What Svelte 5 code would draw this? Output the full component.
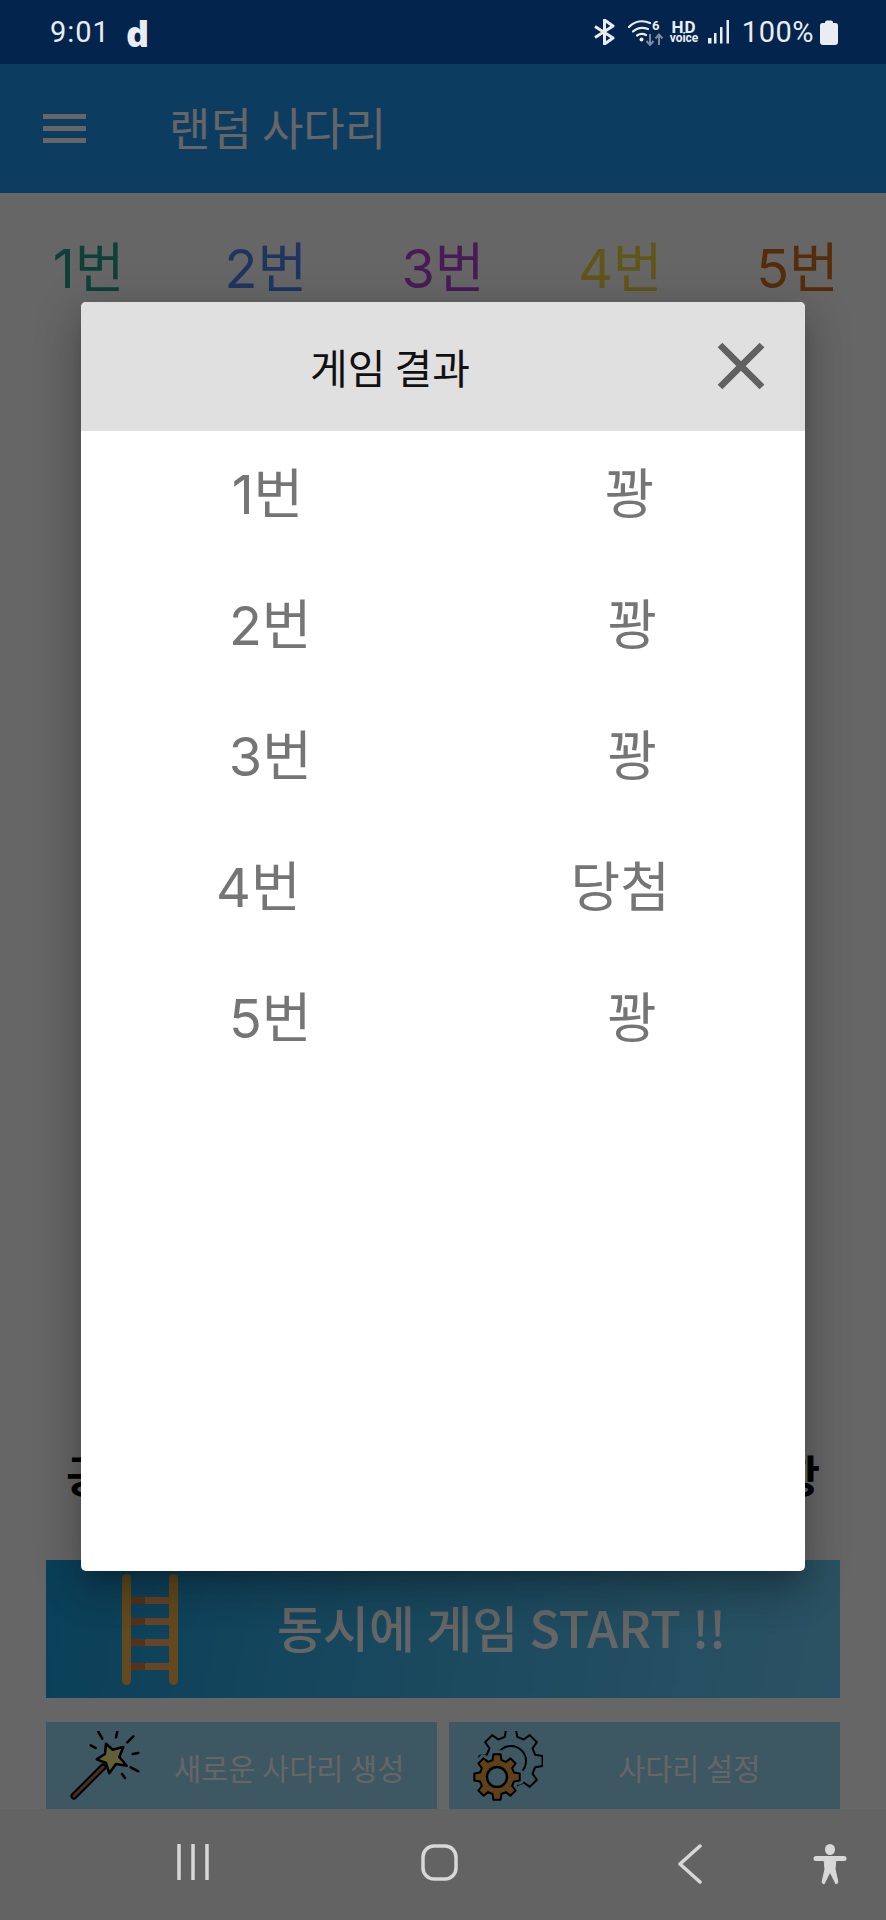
<script>
  const players = [
    { label: '1번', color: '#26a08c' },
    { label: '2번', color: '#4f86f0' },
    { label: '3번', color: '#b445d8' },
    { label: '4번', color: '#f0d840' },
    { label: '5번', color: '#d87019' }
  ];

  const results = [
    { label: '1번', value: '꽝' },
    { label: '2번', value: '꽝' },
    { label: '3번', value: '꽝' },
    { label: '4번', value: '당첨' },
    { label: '5번', value: '꽝' }
  ];

  const rungs = [23, 44, 65, 89];

  const rays = [
    'M28.3 .8 32.3 7.7',
    'M47.3 .8 46 6.3',
    'M63.3 5.3 57.3 11.3',
    'M68.3 22 62.7 23',
    'M68.3 40.3 60.7 36.3',
    'M55 47 52 43',
    'M25.7 17 20.7 14.3'
  ];

  // outline of a cog wheel, used by the settings icon
  function gearPath(cx, cy, outer, inner, teeth) {
    const step = (Math.PI * 2) / teeth;
    const pts = [];
    for (let i = 0; i < teeth; i++) {
      const a = i * step - Math.PI / 2;
      const at = (r, t) => {
        const x = cx + r * Math.cos(a + t * step);
        const y = cy + r * Math.sin(a + t * step);
        return `${x.toFixed(1)} ${y.toFixed(1)}`;
      };
      pts.push(at(inner, -0.32), at(outer, -0.2), at(outer, 0.2), at(inner, 0.32));
    }
    return `M${pts.join(' L')} Z`;
  }
</script>

<div class="phone">
  <div class="status-bar">
    <span class="time">9:01</span>
    <span class="carrier">d</span>
    <div class="status-icons">
      <svg class="bt" width="24" height="26" viewBox="0 0 24 26">
        <path d="M2 7.500 20 19 11.500 25V1L20 7 2 18.500" fill="none" stroke="#e9edf2" stroke-width="3" stroke-linejoin="round" />
      </svg>
      <svg class="wifi" width="36" height="27" viewBox="0 0 36 27">
        <g fill="none" stroke="#e9edf2" stroke-width="2.200" stroke-linecap="round">
          <path d="M1 8C7 2 15 1 22 4" />
          <path d="M5 12.500C9.500 8.500 15 8 20 10" />
          <path d="M9 16.500C12 14.500 15 14.500 18 16" />
        </g>
        <circle cx="13.500" cy="20.500" r="2" fill="#e9edf2" />
        <text x="24" y="11" class="wifi-six">6</text>
        <path d="M22 15V25M18.500 22 22 26 25.500 22" fill="none" stroke="#7d8a9c" stroke-width="2" />
        <path d="M31 26V16M27.500 19.500 31 15.500 34.500 19.500" fill="none" stroke="#7d8a9c" stroke-width="2" />
      </svg>
      <svg class="hd" width="32" height="36" viewBox="0 0 32 36">
        <text x="16" y="18.500" class="hd-top">HD</text>
        <text x="16" y="28" class="hd-bottom">voice</text>
      </svg>
      <svg class="signal" width="22" height="24" viewBox="0 0 22 24">
        <rect x="0" y="18" width="3.500" height="5.500" fill="#e9edf2" />
        <rect x="6" y="13" width="2.500" height="10.500" fill="#e9edf2" />
        <rect x="12" y="7" width="2.500" height="16.500" fill="#e9edf2" />
        <rect x="18.500" y="0" width="2.500" height="23.500" fill="#e9edf2" />
      </svg>
      <span class="battery-text">100%</span>
      <svg class="battery" width="18" height="25" viewBox="0 0 18 25">
        <path d="M5 2.500Q5 .5 7 .5H11Q13 .5 13 2.500V3H15.500Q18 3 18 5.500V22Q18 25 15 25H3Q0 25 0 22V5.500Q0 3 2.500 3H5Z" fill="#e9edf2" />
      </svg>
    </div>
  </div>

  <div class="screen">
    <header class="app-bar">
      <div class="menu-icon"><span></span><span></span><span></span></div>
      <h1>랜덤 사다리</h1>
    </header>

    <main class="content">
      <div class="players">
        {#each players as p}
          <div class="player" style="color: {p.color}">{p.label}</div>
        {/each}
      </div>

      <div class="notice"><span>공</span><span>항</span></div>

      <button class="start-btn">
        <svg class="ladder" width="56" height="111" viewBox="0 0 56 111">
          {#each rungs as y}
            <rect x="8" {y} width="40" height="7" fill="#ffaa64" />
            <rect x="9" {y} width="14" height="7" fill="#d47d3e" />
          {/each}
          <rect x="0" y="0" width="9" height="111" rx="4.500" fill="#f8b64a" />
          <rect x="47" y="0" width="9" height="111" rx="4.500" fill="#f8b64a" />
        </svg>
        <span>동시에 게임 START !!</span>
      </button>

      <div class="tools">
        <button class="tool-btn">
          <svg class="tool-icon" width="70" height="70" viewBox="0 0 70 70">
            <path d="M4 65 33 36" stroke="#000" stroke-width="7" stroke-linecap="round" />
            <path d="M4 65 33 36" stroke="#b5705a" stroke-width="3" stroke-linecap="round" />
            <path d="M36 12.700 42.700 18.700 53.300 16 49.300 26 56.700 34.700 46 33 39.300 42.300 36 32 26.700 28.300 35 23Z" fill="#f8ee8a" stroke="#000" stroke-width="2.500" stroke-linejoin="round" />
            {#each rays as d}
              <path {d} stroke="#000" stroke-width="2.500" stroke-linecap="round" />
            {/each}
          </svg>
          <span class="tool-label">새로운 사다리 생성</span>
        </button>
        <button class="tool-btn">
          <svg class="tool-icon" width="70" height="70" viewBox="0 0 70 70">
            <path d={gearPath(38, 30, 32, 25, 8)} fill="none" stroke="#000" stroke-width="2" stroke-linejoin="round" />
            <circle cx="38" cy="30" r="15" fill="none" stroke="#000" stroke-width="2" />
            <path d={gearPath(24, 46, 23, 17.500, 8)} fill="#98d9f7" stroke="#98d9f7" stroke-width="8" stroke-linejoin="round" />
            <path d={gearPath(24, 46, 23, 17.500, 8)} fill="#f0a03a" stroke="#000" stroke-width="2" stroke-linejoin="round" />
            <circle cx="24" cy="46" r="10" fill="#98d9f7" stroke="#000" stroke-width="2.500" />
          </svg>
          <span class="tool-label settings">사다리 설정</span>
        </button>
      </div>
    </main>

    <div class="scrim"></div>

    <div class="dialog">
      <div class="dialog-head">
        <h2>게임 결과</h2>
        <svg class="close" width="80" height="80" viewBox="0 0 24 24">
          <path d="M19 6.410 17.590 5 12 10.590 6.410 5 5 6.410 10.590 12 5 17.590 6.410 19 12 13.410 17.590 19 19 17.590 13.410 12z" fill="#616161" />
        </svg>
      </div>
      <div class="dialog-body">
        {#each results as r}
          <div class="result-row">
            <span>{r.label}</span>
            <span>{r.value}</span>
          </div>
        {/each}
      </div>
    </div>
  </div>

  <nav class="nav-bar">
    <svg class="recents" width="32" height="36" viewBox="0 0 32 36">
      <path d="M2 1V35M16 1V35M30 1V35" stroke="#d8d8d8" stroke-width="3.500" stroke-linecap="round" />
    </svg>
    <svg class="home" width="37" height="37" viewBox="0 0 37 37">
      <rect x="2" y="2" width="33" height="33" rx="11" fill="none" stroke="#d8d8d8" stroke-width="3.500" />
    </svg>
    <svg class="back" width="24" height="40" viewBox="0 0 24 40">
      <path d="M22 2 2 20 22 38" fill="none" stroke="#d8d8d8" stroke-width="3.500" stroke-linecap="round" stroke-linejoin="round" />
    </svg>
    <svg class="a11y" width="34" height="41" viewBox="0 0 34 41">
      <ellipse cx="17" cy="5.500" rx="5" ry="5.500" fill="#d8d8d8" />
      <path d="M3 14.500H31" stroke="#d8d8d8" stroke-width="5" stroke-linecap="round" />
      <path d="M11 15H23L22 25 25 38.500 23 40 17 28 11 40 9 38.500 12 25Z" fill="#d8d8d8" stroke="#d8d8d8" stroke-linejoin="round" />
    </svg>
  </nav>
</div>

<style>
  :global(body) {
    margin: 0;
    background: #fff;
  }

  .phone {
    width: 886px;
    height: 1920px;
    display: flex;
    flex-direction: column;
    overflow: hidden;
    font-family: "Noto Sans CJK KR", "Noto Sans", sans-serif;
  }

  .status-bar {
    height: 64px;
    flex: none;
    background: #03244c;
    color: #e9edf2;
    display: flex;
    align-items: center;
    padding: 0 48px 0 50px;
    box-sizing: border-box;
  }

  .time {
    font-family: Roboto, sans-serif;
    font-size: 29px;
    letter-spacing: 1px;
  }

  .carrier {
    font-family: "Open Sans", sans-serif;
    font-size: 36px;
    font-weight: 800;
    line-height: 1;
    margin: 4px 0 0 16px;
  }

  .status-icons {
    margin-left: auto;
    display: flex;
    align-items: center;
  }

  .wifi {
    margin-left: 11px;
  }

  .wifi-six {
    font-family: Roboto, sans-serif;
    font-size: 13px;
    font-weight: 700;
    fill: #e9edf2;
  }

  .hd {
    margin-left: 4px;
  }

  .hd text {
    font-family: Roboto, sans-serif;
    font-weight: 700;
    fill: #e9edf2;
    text-anchor: middle;
  }

  .hd-top {
    font-size: 17px;
    letter-spacing: 1px;
  }

  .hd-bottom {
    font-size: 12px;
  }

  .signal {
    margin-left: 8px;
  }

  .battery-text {
    font-family: Roboto, sans-serif;
    font-size: 29px;
    margin-left: 12px;
    letter-spacing: .5px;
  }

  .battery {
    margin-left: 6px;
  }

  .screen {
    position: relative;
    flex: 1;
    min-height: 0;
    display: flex;
    flex-direction: column;
  }

  .app-bar {
    height: 129px;
    flex: none;
    background: #2196f3;
    display: flex;
    align-items: center;
    padding-left: 43px;
    color: #fff;
  }

  .menu-icon {
    width: 43px;
    display: flex;
    flex-direction: column;
    gap: 7px;
  }

  .menu-icon span {
    height: 5px;
    background: #fff;
  }

  h1 {
    margin: -4px 0 0 83px;
    font-size: 45px;
    font-weight: 400;
    line-height: 1;
  }

  .content {
    flex: 1;
    min-height: 0;
    background: #fff;
    display: flex;
    flex-direction: column;
  }

  .players {
    display: flex;
    padding-top: 40px;
    font-family: Inter, "Noto Sans CJK KR", sans-serif;
  }

  .player {
    flex: 1;
    text-align: center;
    font-size: 54px;
    line-height: 72px;
  }

  .notice {
    margin-top: auto;
    padding: 0 66px;
    display: flex;
    justify-content: space-between;
    font-size: 44px;
    font-weight: 700;
    line-height: 64px;
    color: #000;
  }

  .start-btn {
    margin: 54px 46px 0;
    height: 138px;
    flex: none;
    border: 0;
    padding: 0 0 0 76px;
    background: linear-gradient(100deg, #1aa0e0, #6dcef9);
    display: flex;
    align-items: center;
    color: #fff;
    font-family: inherit;
  }

  .ladder {
    flex: none;
  }

  .start-btn span {
    margin: -6px 0 0 99px;
    font-size: 50px;
    font-weight: 500;
    white-space: nowrap;
  }

  .tools {
    margin: 24px 46px 0;
    height: 87px;
    flex: none;
    display: flex;
    gap: 12px;
  }

  .tool-btn {
    flex: 1;
    border: 0;
    padding: 0 0 0 24px;
    background: #98d9f7;
    display: flex;
    align-items: center;
    color: #fff;
    font-family: inherit;
  }

  .tool-icon {
    flex: none;
  }

  .tool-label {
    margin: 3px 0 0 34px;
    font-size: 29.500px;
    white-space: nowrap;
  }

  .tool-label.settings {
    margin-left: 75px;
  }

  .scrim {
    position: absolute;
    inset: 0;
    background: rgba(0, 0, 0, 0.6);
  }

  .dialog {
    position: absolute;
    top: 238px;
    left: 81px;
    width: 724px;
    height: 1269px;
    background: #fff;
    border-radius: 5px;
    overflow: hidden;
    box-shadow: 0 11px 15px -7px rgba(0, 0, 0, 0.2), 0 24px 38px 3px rgba(0, 0, 0, 0.14), 0 9px 46px 8px rgba(0, 0, 0, 0.12);
    display: flex;
    flex-direction: column;
  }

  .dialog-head {
    position: relative;
    height: 129px;
    flex: none;
    background: #e0e0e0;
    display: flex;
    align-items: center;
    justify-content: center;
  }

  h2 {
    margin: 0 106px 0 0;
    font-size: 41px;
    font-weight: 400;
    color: #111;
    line-height: 1;
  }

  .close {
    position: absolute;
    right: 24px;
    top: 24px;
  }

  .dialog-body {
    display: flex;
    flex-direction: column;
    font-family: Inter, "Noto Sans CJK KR", sans-serif;
  }

  .result-row {
    height: 131px;
    display: flex;
    justify-content: space-around;
    color: #757575;
    font-size: 54px;
    line-height: 127px;
  }

  .nav-bar {
    height: 111px;
    flex: none;
    background: #636363;
    display: flex;
    align-items: flex-start;
    padding: 35px 0 0 177px;
    box-sizing: border-box;
  }

  .home {
    margin-left: 212px;
  }

  .back {
    margin-left: 220px;
  }

  .a11y {
    margin-left: 111px;
  }
</style>
